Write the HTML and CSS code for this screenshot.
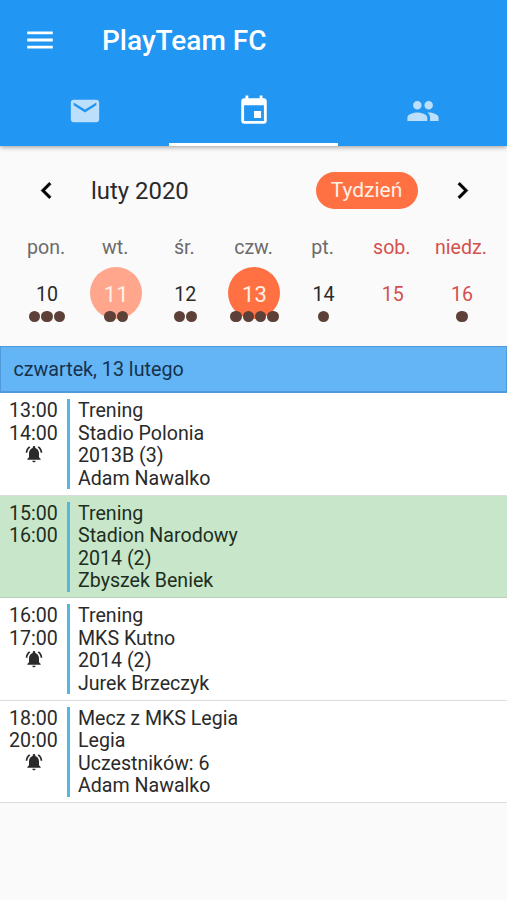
FILE: index.html
```html
<!DOCTYPE html>
<html lang="pl">
<head>
<meta charset="utf-8">
<title>PlayTeam FC</title>
<link rel="stylesheet" href="styles.css">
</head>
<body>
<svg class="defs" aria-hidden="true">
  <symbol id="bell" viewBox="0 0 24 24"><path d="M7.58 4.08L6.15 2.65C3.75 4.48 2.17 7.3 2.03 10.5h2c.15-2.65 1.51-4.97 3.55-6.42zm12.39 6.42h2c-.15-3.2-1.73-6.02-4.12-7.85l-1.42 1.43c2.02 1.45 3.39 3.77 3.54 6.42zM18 11c0-3.07-1.64-5.64-4.5-6.32V4c0-.83-.67-1.5-1.5-1.5s-1.5.67-1.5 1.5v.68C7.63 5.36 6 7.92 6 11v5l-2 2v1h16v-1l-2-2v-5zm-6 11c.14 0 .27-.01.4-.04.65-.14 1.18-.58 1.44-1.18.1-.24.15-.5.15-.78h-4c.01 1.1.9 2 2.01 2z"/></symbol>
</svg>
<header class="appbar">
  <div class="toolbar">
    <svg class="icon" viewBox="0 0 24 24"><path d="M3 18h18v-2H3v2zm0-5h18v-2H3v2zm0-7v2h18V6H3z"/></svg>
    <h1 class="title">PlayTeam FC</h1>
  </div>
  <nav class="tabs">
    <div class="tab"><svg class="icon" viewBox="0 0 24 24"><path d="M20 4H4c-1.1 0-1.99.9-1.99 2L2 18c0 1.1.9 2 2 2h16c1.1 0 2-.9 2-2V6c0-1.1-.9-2-2-2zm0 4l-8 5-8-5V6l8 5 8-5v2z"/></svg></div>
    <div class="tab active"><svg class="icon" viewBox="0 0 24 24"><path d="M17 12h-5v5h5v-5zM16 1v2H8V1H6v2H5c-1.11 0-1.99.9-1.99 2L3 19c0 1.1.89 2 2 2h14c1.1 0 2-.9 2-2V5c0-1.1-.9-2-2-2h-1V1h-2zm3 18H5V8h14v11z"/></svg></div>
    <div class="tab"><svg class="icon" viewBox="0 0 24 24"><path d="M16 11c1.66 0 2.99-1.34 2.99-3S17.66 5 16 5s-3 1.34-3 3 1.34 3 3 3zm-8 0c1.66 0 2.99-1.34 2.99-3S9.66 5 8 5 5 6.34 5 8s1.34 3 3 3zm0 2c-2.33 0-7 1.17-7 3.5V19h14v-2.5c0-2.33-4.67-3.5-7-3.5zm8 0c-.29 0-.62.02-.97.05 1.16.84 1.97 1.97 1.97 3.45V19h6v-2.5c0-2.33-4.67-3.5-7-3.5z"/></svg></div>
  </nav>
</header>
<section class="calendar">
  <div class="month">
    <svg class="chevron" viewBox="0 0 24 24"><path d="M15.41 7.41L14 6l-6 6 6 6 1.41-1.41L10.83 12z"/></svg>
    <span class="month-name">luty 2020</span>
    <span class="mode">Tydzień</span>
    <svg class="chevron" viewBox="0 0 24 24"><path d="M10 6L8.59 7.41 13.17 12l-4.58 4.59L10 18l6-6z"/></svg>
  </div>
  <div class="week names">
    <span>pon.</span><span>wt.</span><span>śr.</span><span>czw.</span><span>pt.</span><span class="weekend">sob.</span><span class="weekend">niedz.</span>
  </div>
  <div class="week days">
    <div class="day"><span class="num">10</span><div class="dots"><i></i><i></i><i></i></div></div>
    <div class="day"><span class="num today">11</span><div class="dots"><i></i><i></i></div></div>
    <div class="day"><span class="num">12</span><div class="dots"><i></i><i></i></div></div>
    <div class="day"><span class="num selected">13</span><div class="dots"><i></i><i></i><i></i><i></i></div></div>
    <div class="day"><span class="num">14</span><div class="dots"><i></i></div></div>
    <div class="day"><span class="num weekend">15</span></div>
    <div class="day"><span class="num weekend">16</span><div class="dots"><i></i></div></div>
  </div>
</section>
<h2 class="date">czwartek, 13 lutego</h2>
<main>
  <article class="event">
    <div class="time">13:00<br>14:00<svg class="bell"><use href="#bell"/></svg></div>
    <div class="info">Trening<br>Stadio Polonia<br>2013B (3)<br>Adam Nawalko</div>
  </article>
  <article class="event current">
    <div class="time">15:00<br>16:00</div>
    <div class="info">Trening<br>Stadion Narodowy<br>2014 (2)<br>Zbyszek Beniek</div>
  </article>
  <article class="event">
    <div class="time">16:00<br>17:00<svg class="bell"><use href="#bell"/></svg></div>
    <div class="info">Trening<br>MKS Kutno<br>2014 (2)<br>Jurek Brzeczyk</div>
  </article>
  <article class="event">
    <div class="time">18:00<br>20:00<svg class="bell"><use href="#bell"/></svg></div>
    <div class="info">Mecz z MKS Legia<br>Legia<br>Uczestników: 6<br>Adam Nawalko</div>
  </article>
</main>
</body>
</html>
```
FILE: styles.css
```css
* { box-sizing: border-box; }
html, body { height: 100%; }
body {
  margin: 0;
  overflow: hidden;
  background: #fafafa;
  color: #2a2a2a;
  font-family: Roboto, sans-serif;
  font-size: 19.6px;
}
.defs { position: absolute; width: 0; height: 0; }
svg { display: block; fill: currentColor; }

.appbar {
  height: 146px;
  background: #2196f3;
  color: #fff;
  box-shadow: 0 1px 5px rgba(0, 0, 0, .4);
}
.icon { width: 34px; height: 34px; }
.toolbar {
  display: flex;
  align-items: center;
  gap: 45px;
  height: 79px;
  padding-left: 23px;
}
.title { margin: 3px 0 0; font-size: 28px; font-weight: 500; line-height: 34px; }
.tabs { display: grid; grid-template-columns: repeat(3, 1fr); height: 67px; }
.tab {
  display: flex;
  justify-content: center;
  padding-top: 15px;
  border-bottom: 3px solid transparent;
  color: rgba(255, 255, 255, .7);
}
.tab.active { color: #fff; border-color: #fff; }

.calendar { height: 200px; padding: 21px 11.5px 0; }
.month { display: flex; align-items: center; height: 47px; padding: 0 17px 0 18px; }
.chevron { width: 33px; height: 33px; color: #000; stroke: #000; stroke-width: .3; }
.month-name { margin-left: 28.5px; font-size: 23.9px; }
.mode {
  margin-left: auto;
  margin-right: 28px;
  width: 102px;
  height: 37px;
  border-radius: 19px;
  background: #ff7043;
  color: #fff0e4;
  font-size: 21px;
  line-height: 37px;
  text-align: center;
}
.week { display: grid; grid-template-columns: repeat(7, 1fr); text-align: center; }
.names { height: 53px; line-height: 68px; color: #6b6b6b; }
.names > span { white-space: nowrap; }
.names .weekend, .num.weekend { color: #d3514f; }
.days { padding-left: 1px; margin-right: -1px; }
.day { display: flex; flex-direction: column; align-items: center; }
.num { width: 52px; height: 52px; border-radius: 50%; line-height: 55px; }
.today { background: #ffa68c; color: #fff0e8; font-size: 22px; }
.selected { background: #ff7043; color: #fff0e4; font-size: 22px; }
.dots { display: flex; gap: 1px; margin-top: -8.5px; }
.dots i { width: 11.3px; height: 11.3px; border-radius: 50%; background: #5d4037; }

.date {
  height: 47px;
  margin: 0;
  padding-left: 12.5px;
  border: solid #519ad9;
  border-width: 1px 1px 2px;
  background: #64b5f6;
  color: #16324d;
  font-size: 19.7px;
  font-weight: 400;
  line-height: 46px;
}
.event {
  display: flex;
  height: 102.6px;
  padding-top: 6px;
  border-bottom: 1.5px solid #dcdcdc;
  background: #fff;
  line-height: 22.5px;
}
.event.current { background: #c8e6c9; border-color: #b6cfb7; color: #1d2e1e; }
.time { width: 67px; padding-top: 1px; text-align: center; }
.bell { width: 20px; height: 20px; margin: -1px auto 0; }
.info { height: 90px; padding: 1px 0 0 8px; border-left: 3px solid #53b7df; }
```
